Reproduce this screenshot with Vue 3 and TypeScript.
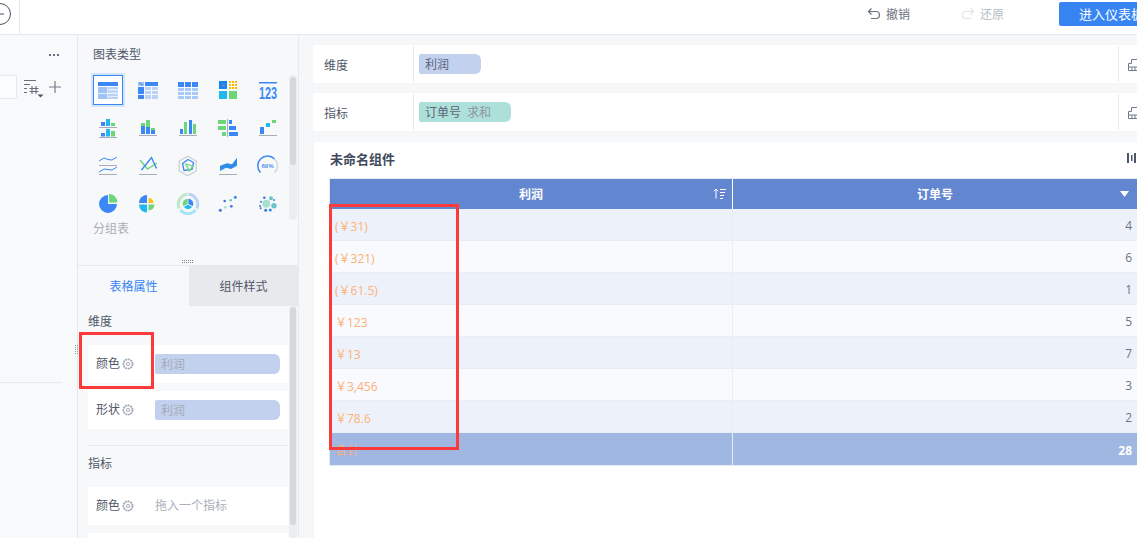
<script setup lang="ts">
interface Row { profit: string; orders: number }
const rows: Row[] = [
  { profit: '(￥31)', orders: 4 },
  { profit: '(￥321)', orders: 6 },
  { profit: '(￥61.5)', orders: 1 },
  { profit: '￥123', orders: 5 },
  { profit: '￥13', orders: 7 },
  { profit: '￥3,456', orders: 3 },
  { profit: '￥78.6', orders: 2 },
]
const dots: number[][] = []
for (let i = 0; i < 3; i++) for (let j = 0; j < 3; j++) dots.push([16 + i * 3, 6 + j * 3])
</script>

<template>
  <div class="app">
    <header class="top">
      <div class="back">
        <svg width="22" height="26" viewBox="0 0 22 26"><circle cx="11" cy="14" r="10.5" fill="none" stroke="#4a5160" stroke-width="1"/><path d="M7 14h8" stroke="#4a5160"/></svg>
      </div>
      <div class="top-actions">
        <span class="act undo">
          <svg width="14" height="14" viewBox="0 0 14 14" fill="none" stroke="#6a7080" stroke-width="1.2"><path d="M4.5 1.5 1.5 4.5l3 3M1.5 4.5H9a3.5 3.5 0 0 1 0 7H4"/></svg>
          撤销
        </span>
        <span class="act redo">
          <svg width="14" height="14" viewBox="0 0 14 14" fill="none" stroke="#dfe2e7" stroke-width="1.2"><path d="M9.5 1.5l3 3-3 3M12.5 4.5H5a3.5 3.5 0 0 0 0 7h5"/></svg>
          还原
        </span>
        <div class="enter">进入仪表板</div>
      </div>
    </header>

    <div class="main">
      <aside class="left">
        <div class="more"><i></i><i></i><i></i></div>
        <div class="tools">
          <div class="input"></div>
          <svg class="filter" width="20" height="20" viewBox="0 0 20 20" fill="none" stroke="#676e7c" stroke-width="1.1"><path d="M0 1.500h12M0 5.500h6M0 9.500h3M0 13.500h3M8 7v8M12 7v8M5.500 9.500h9M5.500 12.500h9"/><path d="M13.500 15.500h6l-3 3z" fill="#4a5160" stroke="none"/></svg>
          <svg class="plus" width="12" height="12" viewBox="0 0 12 12" stroke="#767d8b" stroke-width="1.2"><path d="M6 0v12M0 6h12"/></svg>
        </div>
        <div class="left-line"></div>
      </aside>

      <section class="mid">
        <div class="chart-pane">
          <div class="pane-title">图表类型</div>
          <div class="grid">
            <div class="cell"><div class="sel">
              <svg width="30" height="30" viewBox="0 0 30 30" class="sel-svg"><rect x="5" y="7" width="20" height="4" fill="#3b87f5"/><rect x="5" y="12" width="9.5" height="6" fill="#9fc3f7"/><rect x="5" y="18.700" width="9.500" height="5.300" fill="#9fc3f7"/><rect x="15" y="12" width="10" height="2.400" fill="#b9d2f8"/><rect x="15" y="15.300" width="10" height="2.400" fill="#b9d2f8"/><rect x="15" y="18.700" width="10" height="2.400" fill="#b9d2f8"/><rect x="15" y="21.700" width="10" height="2.300" fill="#b9d2f8"/></svg>
            </div></div>
            <div class="cell"><svg width="30" height="30" viewBox="0 0 30 30"><path d="M5 7h6v4H5z" fill="#9fc3f7"/><path d="M6 7.500l4 3" stroke="#3b87f5"/><rect x="12" y="7" width="13" height="4" fill="#3b87f5"/><rect x="5" y="12" width="6" height="7" fill="#3b87f5"/><rect x="5" y="20" width="6" height="4" fill="#3b87f5"/><rect x="12" y="12" width="6" height="3" fill="#b9d2f8"/><rect x="19" y="12" width="6" height="3" fill="#b9d2f8"/><rect x="12" y="16" width="6" height="3" fill="#b9d2f8"/><rect x="19" y="16" width="6" height="3" fill="#b9d2f8"/><rect x="12" y="20" width="6" height="4" fill="#b9d2f8"/><rect x="19" y="20" width="6" height="4" fill="#b9d2f8"/></svg></div>
            <div class="cell"><svg width="30" height="30" viewBox="0 0 30 30"><g fill="#3b87f5"><rect x="5" y="7" width="6" height="5"/><rect x="12" y="7" width="6" height="5"/><rect x="19" y="7" width="6" height="5"/></g><g fill="#a9c9f8"><rect x="5" y="13" width="6" height="3"/><rect x="12" y="13" width="6" height="3"/><rect x="19" y="13" width="6" height="3"/><rect x="5" y="17" width="6" height="3"/><rect x="12" y="17" width="6" height="3"/><rect x="19" y="17" width="6" height="3"/><rect x="5" y="21" width="6" height="3"/><rect x="12" y="21" width="6" height="3"/><rect x="19" y="21" width="6" height="3"/></g></svg></div>
            <div class="cell"><svg width="30" height="30" viewBox="0 0 30 30"><rect x="6" y="6" width="8" height="8" fill="#0f86ee"/><rect x="8.500" y="8.500" width="3.500" height="3.500" fill="#4f7fe0"/><rect v-for="(d, i) in dots" :key="i" :x="d[0]" :y="d[1]" width="2" height="2" fill="#ffb800"/><rect x="6" y="16" width="8" height="8" fill="#1eb9ee"/><rect x="16" y="16" width="8" height="8" fill="#6cd67a"/></svg></div>
            <div class="cell"><svg width="30" height="30" viewBox="0 0 30 30"><rect x="6" y="7" width="18" height="1.500" fill="#3b87f5"/><text x="6" y="24" class="num123" textLength="18" lengthAdjust="spacingAndGlyphs">123</text></svg></div>

            <div class="cell"><svg width="30" height="30" viewBox="0 0 30 30"><rect x="8" y="9" width="4" height="4" fill="#3b87f5"/><rect x="13" y="6" width="4" height="7" fill="#1eb9ee"/><rect x="18" y="10" width="4" height="3" fill="#6cd67a"/><path d="M6 14.500h18M6 24.500h18" stroke="#a8adb8"/><rect x="8" y="20" width="4" height="3.500" fill="#3b87f5"/><rect x="13" y="16" width="4" height="7.500" fill="#1eb9ee"/><rect x="18" y="18" width="4" height="5.500" fill="#6cd67a"/></svg></div>
            <div class="cell"><svg width="30" height="30" viewBox="0 0 30 30"><rect x="8" y="13" width="4" height="8" fill="#3b87f5"/><rect x="8" y="10" width="4" height="3" fill="#6cd67a"/><rect x="13" y="14" width="4" height="7" fill="#3b87f5"/><rect x="13" y="7" width="4" height="7" fill="#6cd67a"/><rect x="18" y="17" width="4" height="4" fill="#3b87f5"/><rect x="18" y="15" width="4" height="2" fill="#6cd67a"/><path d="M6 22.500h18" stroke="#a8adb8"/></svg></div>
            <div class="cell"><svg width="30" height="30" viewBox="0 0 30 30"><rect x="7" y="16" width="3" height="5" fill="#3b87f5"/><rect x="11" y="9" width="3" height="12" fill="#6cd67a"/><rect x="16" y="7" width="3" height="14" fill="#3b87f5"/><rect x="20" y="11" width="3" height="10" fill="#6cd67a"/><path d="M6 22.500h18" stroke="#a8adb8"/></svg></div>
            <div class="cell"><svg width="30" height="30" viewBox="0 0 30 30"><path d="M14.500 6v18" stroke="#a8adb8"/><rect x="5" y="7" width="8" height="4" fill="#6cd67a"/><rect x="5" y="13" width="8" height="4" fill="#6cd67a"/><rect x="9" y="19" width="4" height="4" fill="#6cd67a"/><rect x="16" y="7" width="3" height="4" fill="#3b87f5"/><rect x="16" y="13" width="7" height="4" fill="#3b87f5"/><rect x="16" y="19" width="9" height="4" fill="#3b87f5"/></svg></div>
            <div class="cell"><svg width="30" height="30" viewBox="0 0 30 30"><rect x="7" y="14" width="4" height="7" fill="#3b87f5"/><rect x="13" y="10" width="4" height="4" fill="#1eb9ee"/><rect x="19" y="7" width="4" height="3" fill="#6cd67a"/><path d="M6 22.500h18" stroke="#a8adb8"/></svg></div>

            <div class="cell"><svg width="30" height="30" viewBox="0 0 30 30" fill="none"><path d="M6 10l5-3 4 1.500 4 .5 5-3M6 21l5-3 4 .5 4 .5 5-3" stroke="#3b87f5"/><path d="M6 14.500h18M6 23.500h18" stroke="#a8adb8"/></svg></div>
            <div class="cell"><svg width="30" height="30" viewBox="0 0 30 30" fill="none"><path d="M7 9l7.500 9 9.500-6" stroke="#6cd67a" stroke-width="1.400"/><path d="M8.500 19l10-12.500 5 11" stroke="#3b87f5" stroke-width="1.400"/><path d="M6 23.500h18" stroke="#a8adb8"/></svg></div>
            <div class="cell"><svg width="30" height="30" viewBox="0 0 30 30" fill="none"><path d="M14.700 5.200l8.500 4.900v9.800l-8.500 4.900-8.500-4.900v-9.800z" stroke="#c8ccd4" stroke-width="1.200"/><path d="M15 8.500l5.500 3-1.500 7-8 1-1.500-7z" stroke="#3b87f5" stroke-width="1.300"/><path d="M13 13l7 2-4 5z" stroke="#6cd67a" stroke-width="1.300"/></svg></div>
            <div class="cell"><svg width="30" height="30" viewBox="0 0 30 30"><path d="M7 14.700 14 12.300l5 1L24 6.700v8L18 18l-5-1.300L7 20z" fill="#2f8ce8"/><path d="M6 23.500h18" stroke="#a8adb8"/></svg></div>
            <div class="cell"><svg width="30" height="30" viewBox="0 0 30 30" fill="none"><path d="M7.500 21.500A9 9 0 1 1 21.500 8" stroke="#3b87f5" stroke-width="1.500"/><path d="M21.500 8A9 9 0 0 1 21.500 21.500" stroke="#d4d7dc" stroke-width="1.500"/><text x="14.500" y="17" class="gauge">60%</text></svg></div>

            <div class="cell"><svg width="30" height="30" viewBox="0 0 30 30"><path d="M15 6A9 9 0 1 0 24 15H15z" fill="#3b87f5"/><path d="M16 5a8.500 8.500 0 0 1 8.500 8.500H16z" fill="#6cd67a"/></svg></div>
            <div class="cell"><svg width="30" height="30" viewBox="0 0 30 30"><path d="M14 14V6a8 8 0 0 0-8 8z" fill="#3b87f5"/><path d="M15.500 14V9a5 5 0 0 1 5 5z" fill="#ffc107"/><path d="M14 15.500H6a8 8 0 0 0 8 8z" fill="#1eb9ee"/><path d="M15.500 15.500v6a6 6 0 0 0 6-6z" fill="#6cd67a"/></svg></div>
            <div class="cell"><svg width="30" height="30" viewBox="0 0 30 30" fill="none"><path d="M15.500 5.200a10 10 0 0 1 8.200 14.300" stroke="#b9d2f8" stroke-width="3"/><path d="M22.700 21a10 10 0 0 1-15.400 0" stroke="#a9e3f5" stroke-width="3"/><path d="M6.300 19.500A10 10 0 0 1 14.500 5.200" stroke="#bfe8c6" stroke-width="3"/><path d="M15.300 9.800v5l4.300 2.500a5 5 0 0 0-4.300-7.500z" fill="#3b87f5"/><path d="M14.700 9.800a5 5 0 0 0-4.300 7.500l4.300-2.500z" fill="#6cd67a"/><path d="M10.900 18a5 5 0 0 0 8.200 0L15 15.600z" fill="#1eb9ee"/></svg></div>
            <div class="cell"><svg width="30" height="30" viewBox="0 0 30 30"><circle cx="7.300" cy="21.300" r="1.500" fill="#3f78d8"/><circle cx="11.700" cy="12" r="1.300" fill="#3f78d8"/><circle cx="12.300" cy="18.300" r="1.400" fill="#a8e0d0"/><circle cx="17.700" cy="11.300" r="1.300" fill="#6cc4c8"/><circle cx="18.300" cy="17.300" r="1.400" fill="#3f78d8"/><circle cx="22.300" cy="8.300" r="1.500" fill="#2f8ce8"/></svg></div>
            <div class="cell"><svg width="30" height="30" viewBox="0 0 30 30"><circle cx="13.300" cy="14.700" r="4" fill="#a8e0d0"/><circle cx="21" cy="16.700" r="2.700" fill="#6cc4c8"/><circle cx="18" cy="9.300" r="2" fill="#6cc4c8"/><circle cx="11.300" cy="8.700" r="1.300" fill="#3f78d8"/><circle cx="7" cy="17" r="1" fill="#3f78d8"/><circle cx="8" cy="12.700" r="1" fill="#3f78d8"/><circle cx="7.700" cy="19.300" r="1" fill="#3f78d8"/><circle cx="12.700" cy="21.300" r="1.500" fill="#3f78d8"/><circle cx="17.300" cy="21" r="1.500" fill="#2f8ce8"/><circle cx="21" cy="11" r="1" fill="#2f8ce8"/></svg></div>
          </div>
          <div class="group-label">分组表</div>
          <div class="handle"><i v-for="n in 12" :key="n"></i></div>
          <div class="track track-a"><div class="thumb thumb-a"></div></div>
        </div>

        <div class="tabs">
          <div class="tab on">表格属性</div>
          <div class="tab">组件样式</div>
        </div>

        <div class="props">
          <div class="sec-title first">维度</div>
          <div class="prop">
            <span class="prop-label">颜色</span>
            <svg class="gear" width="12" height="12" viewBox="0 0 12 12" fill="none" stroke="#a4aab5"><circle cx="6" cy="6" r="4.600" stroke-width="1.800" stroke-dasharray="2 .6"/><circle cx="6" cy="6" r="1.600"/></svg>
            <div class="field-pill">利润</div>
          </div>
          <div class="prop gap">
            <span class="prop-label">形状</span>
            <svg class="gear" width="12" height="12" viewBox="0 0 12 12" fill="none" stroke="#a4aab5"><circle cx="6" cy="6" r="4.600" stroke-width="1.800" stroke-dasharray="2 .6"/><circle cx="6" cy="6" r="1.600"/></svg>
            <div class="field-pill">利润</div>
          </div>
          <div class="sep"></div>
          <div class="sec-title">指标</div>
          <div class="prop">
            <span class="prop-label">颜色</span>
            <svg class="gear" width="12" height="12" viewBox="0 0 12 12" fill="none" stroke="#a4aab5"><circle cx="6" cy="6" r="4.600" stroke-width="1.800" stroke-dasharray="2 .6"/><circle cx="6" cy="6" r="1.600"/></svg>
            <span class="hint">拖入一个指标</span>
          </div>
          <div class="prop gap"></div>
          <div class="track track-b"><div class="thumb thumb-b"></div></div>
        </div>
      </section>

      <section class="right">
        <div class="bar">
          <div class="bar-label">维度</div>
          <div class="bar-body"><span class="chip chip-blue">利润</span></div>
          <div class="bar-end"><svg width="12" height="16" viewBox="0 0 12 16" fill="none" stroke="#6f7a8c"><path d="M.5 14.500v-7h3v-4h8M.5 11h11M.5 14.500h11M4 11v3.500M7 11v3.500M10 11v3.500"/></svg></div>
        </div>
        <div class="bar bar-two">
          <div class="bar-label">指标</div>
          <div class="bar-body"><span class="chip chip-green">订单号<em>求和</em></span></div>
          <div class="bar-end"><svg width="12" height="16" viewBox="0 0 12 16" fill="none" stroke="#6f7a8c"><path d="M.5 14.500v-7h3v-4h8M.5 11h11M.5 14.500h11M4 11v3.500M7 11v3.500M10 11v3.500"/></svg></div>
        </div>
        <div class="card">
          <div class="card-head">
            <span class="card-title">未命名组件</span>
            <svg width="10" height="10" viewBox="0 0 10 10" fill="#4a5568"><rect x="0" y="0" width="2" height="10"/><rect x="4" y="2" width="1.500" height="6"/><rect x="7" y="0" width="2" height="10"/></svg>
          </div>
          <div class="table">
            <div class="tr th">
              <div class="col c1">利润
                <svg class="sort" width="13" height="11" viewBox="0 0 13 11" fill="none" stroke="#fff"><path d="M3 10.500V1M.8 3.200 3 1l2.200 2.200M7 1.500h6M7 4.500h5M7 7.500h4M7 10.500h3"/></svg>
              </div>
              <div class="col c2">订单号
                <svg class="tri" width="9" height="6" viewBox="0 0 9 6"><path d="M0 0h9L4.500 6z" fill="#fff"/></svg>
              </div>
            </div>
            <div v-for="(r, i) in rows" :key="i" class="tr td" :class="i % 2 ? 'even' : 'odd'">
              <div class="col c1 profit">{{ r.profit }}</div>
              <div class="col c2 count">{{ r.orders }}</div>
            </div>
            <div class="tr tf">
              <div class="col c1 profit">合计</div>
              <div class="col c2 total">28</div>
            </div>
          </div>
        </div>
      </section>
    </div>

    <div class="grip"><i v-for="n in 15" :key="n"></i></div>
    <div class="mark mark-a"></div>
    <div class="mark mark-b"></div>
  </div>
</template>

<style>
html, body { margin: 0; overflow: hidden; background: #fff; }
</style>

<style scoped>
.app {
  position: relative;
  width: 1137px;
  height: 538px;
  overflow: hidden;
  display: flex;
  flex-direction: column;
  font-family: "Noto Sans CJK SC", "Open Sans", sans-serif;
  font-size: 12px;
  color: #4f5768;
}
.top {
  flex: none;
  height: 35px;
  box-sizing: border-box;
  border-bottom: 1px solid #e6e8ec;
  background: #fff;
  display: flex;
  align-items: flex-start;
  justify-content: space-between;
}
.back {
  width: 20px;
  height: 34px;
  box-sizing: border-box;
  border-right: 1px solid #e6e8ec;
  overflow: hidden;
  flex: none;
}
.back svg { margin-left: -11px; display: block; }
.top-actions { display: flex; align-items: flex-start; width: 270px; flex: none; }
.act { display: flex; align-items: center; gap: 5px; height: 28px; line-height: 28px; white-space: nowrap; }
.undo { color: #6b7280; width: 94px; }
.redo { color: #b7bcc5; width: 98px; }
.enter {
  width: 78px;
  height: 24px;
  margin-top: 2px;
  flex: none;
  box-sizing: border-box;
  padding-left: 20px;
  background: #3685f2;
  border-radius: 2px 0 0 2px;
  color: #fff;
  line-height: 24px;
  font-size: 13px;
  white-space: nowrap;
  overflow: hidden;
}
.main { flex: 1; display: flex; min-height: 0; }
.left {
  width: 78px;
  box-sizing: border-box;
  flex: none;
  background: #f7f9fb;
  border-right: 1px solid #e6e8ec;
  padding-top: 19px;
}
.more { display: flex; gap: 2px; padding-left: 49px; height: 2px; }
.more i { width: 2px; height: 2px; background: #676e7c; }
.tools { display: flex; align-items: center; margin-top: 19px; height: 24px; }
.input {
  width: 17px;
  height: 24px;
  box-sizing: border-box;
  border: 1px solid #e6e8ec;
  border-left: 0;
  border-radius: 0 2px 2px 0;
  background: #fbfcfd;
  margin-right: 7px;
}
.filter { flex: none; margin-top: 4px; }
.plus { margin-left: 5px; flex: none; }
.left-line { width: 62px; height: 1px; background: #e6e8ec; margin-top: 283px; }
.mid {
  width: 221px;
  flex: none;
  box-sizing: border-box;
  border-right: 1px solid #e8eaee;
  background: #f7f8fa;
  display: flex;
  flex-direction: column;
}
.chart-pane {
  position: relative;
  height: 231px;
  flex: none;
  box-sizing: border-box;
  padding: 10px 0 0 15px;
  border-bottom: 1px solid #e6e8ec;
  display: flex;
  flex-direction: column;
}
.pane-title { line-height: 18px; color: #4f5768; }
.grid {
  display: grid;
  grid-template-columns: repeat(5, 40px);
  grid-auto-rows: 38px;
  margin: 8px 0 0 -5px;
  width: 200px;
}
.cell { display: flex; align-items: center; justify-content: center; }
.cell svg { display: block; }
.sel {
  width: 30px;
  height: 30px;
  position: relative;
  box-sizing: border-box;
  border: 1.5px solid #3685f2;
  box-shadow: 0 0 0 2px #d3e3fb;
  background: #fff;
}
.sel-svg { margin: -1.5px; }
.num123 { font-family: "Liberation Sans", sans-serif; font-size: 16px; font-weight: 700; fill: #3b87f5; }
.gauge { font-family: "Liberation Sans", sans-serif; font-size: 6px; font-weight: 700; fill: #4f8ef0; text-anchor: middle; }
.group-label { margin-top: -4px; line-height: 18px; color: #a9aeb8; }
.handle {
  display: grid;
  grid-template-columns: repeat(6, 1px);
  gap: 1px;
  position: absolute;
  left: 104px;
  bottom: 2px;
}
.handle i { width: 1px; height: 1px; background: #7d8492; }
.track { position: absolute; background: #ecedf0; border-radius: 4px; width: 8px; }
.track-a { left: 211px; top: 40px; height: 145px; }
.thumb { width: 6px; margin-left: 1px; background: #d6d8dc; border-radius: 3px; }
.thumb-a { height: 88px; margin-top: 2px; }
.tabs { display: flex; height: 40px; flex: none; }
.tab { flex: 1; line-height: 40px; text-align: center; background: #e8e9ec; color: #4f5768; }
.tab.on { flex: none; width: 111px; background: #f7f8fa; color: #3685f2; }
.props { position: relative; flex: 1; padding: 6px 10px 0; overflow: hidden; }
.sec-title { line-height: 18px; margin-bottom: 15px; color: #4f5768; }
.prop {
  height: 38px;
  background: #fff;
  display: flex;
  align-items: center;
  padding-left: 8px;
}
.prop.gap { margin-top: 8px; }
.prop-label { width: 24px; color: #4f5768; line-height: 16px; margin-top: -2px; }
.gear { margin-left: 2px; flex: none; }
.field-pill {
  margin-left: 21px;
  width: 125px;
  height: 20px;
  box-sizing: border-box;
  padding-left: 6px;
  line-height: 19px;
  background: #c2d1ee;
  color: #a4abb8;
  border-radius: 2px 6px 6px 2px;
}
.hint { margin-left: 21px; color: #aab0ba; line-height: 16px; margin-top: -2px; }
.sep { height: 1px; background: #e6e8ec; margin-top: 16px; margin-bottom: 8px; }
.track-b { left: 211px; top: 0; bottom: 0; }
.thumb-b { height: 218px; margin-top: 1px; }
.right {
  flex: 1;
  min-width: 0;
  background: #f6f7f9;
  box-sizing: border-box;
  padding: 10px 0 0 14px;
  display: flex;
  flex-direction: column;
}
.bar { height: 38px; background: #fff; display: flex; align-items: center; flex: none; }
.bar-two { margin-top: 10px; }
.bar-label { width: 100px; box-sizing: border-box; padding-left: 11px; color: #4f5768; }
.bar-body {
  flex: 1;
  height: 36px;
  display: flex;
  align-items: center;
  border-left: 1px solid #e6e8ec;
  padding-left: 5px;
}
.chip {
  height: 20px;
  line-height: 19px;
  padding-left: 6px;
  box-sizing: border-box;
  border-radius: 2px 6px 6px 2px;
  color: #5b6478;
}
.chip-blue { background: #c2d1ee; width: 62px; }
.chip-green { background: #aee0da; width: 92px; }
.chip em { font-style: normal; color: #8d95a2; margin-left: 6px; }
.bar-end {
  width: 19px;
  height: 36px;
  box-sizing: border-box;
  border-left: 1px solid #e6e8ec;
  padding-left: 9px;
  display: flex;
  align-items: center;
  overflow: hidden;
  flex: none;
}
.bar-end svg { flex: none; }
.card {
  flex: 1;
  margin: 11px 0 0 1px;
  background: #fff;
  padding-left: 15px;
}
.card-head {
  height: 36px;
  box-sizing: border-box;
  padding-bottom: 4px;
  display: flex;
  align-items: center;
  justify-content: space-between;
}
.card-title { font-size: 13px; font-weight: 700; color: #414a5c; margin-left: 1px; }
.table {
  border: 1px solid #e4e9f4;
  border-right: 0;
}
.tr { display: flex; height: 32px; box-sizing: border-box; }
.th { height: 30px; background: #6287d0; color: #fff; font-weight: 700; padding-bottom: 2px; }
.th .col { margin-bottom: -2px; }
.td { border-bottom: 1px solid #e8edf6; }
.td.odd { background: #edf2fa; }
.td.even { background: #f8fafe; }
.tf { background: #a0b7e2; color: #fff; }
.td .col, .tf .col { padding-top: 2px; }
.col { display: flex; align-items: center; position: relative; box-sizing: border-box; }
.c1 { width: 403px; padding-left: 5px; border-right: 1px solid #e8edf6; }
.c2 { flex: 1; justify-content: flex-end; padding-right: 5px; }
.th .c1 { justify-content: center; padding-left: 0; padding-bottom: 2px; border-right-color: #fff; }
.th .c2 { justify-content: center; padding-right: 0; padding-bottom: 2px; }
.tf .c1 { border-right-color: #e4e9f4; }
.sort { position: absolute; right: 6px; top: 9px; }
.tri { position: absolute; right: 8px; top: 12px; }
.profit { color: #ffb077; font-family: "Open Sans", "Noto Sans CJK SC", sans-serif; }
.count { color: #6b7384; font-family: "Open Sans", sans-serif; }
.total { color: #fff; font-weight: 700; font-family: "Open Sans", sans-serif; }
.grip {
  position: absolute;
  left: 75px;
  top: 345px;
  display: grid;
  grid-template-columns: repeat(3, 1px);
  gap: 1px;
}
.grip i { width: 1px; height: 1px; background: #9aa1ad; }
.mark { position: absolute; box-sizing: border-box; border: 3px solid #fc3a3a; }
.mark-a { left: 329px; top: 204px; width: 130px; height: 246px; }
.mark-b { left: 79px; top: 332px; width: 75px; height: 57px; }
</style>
